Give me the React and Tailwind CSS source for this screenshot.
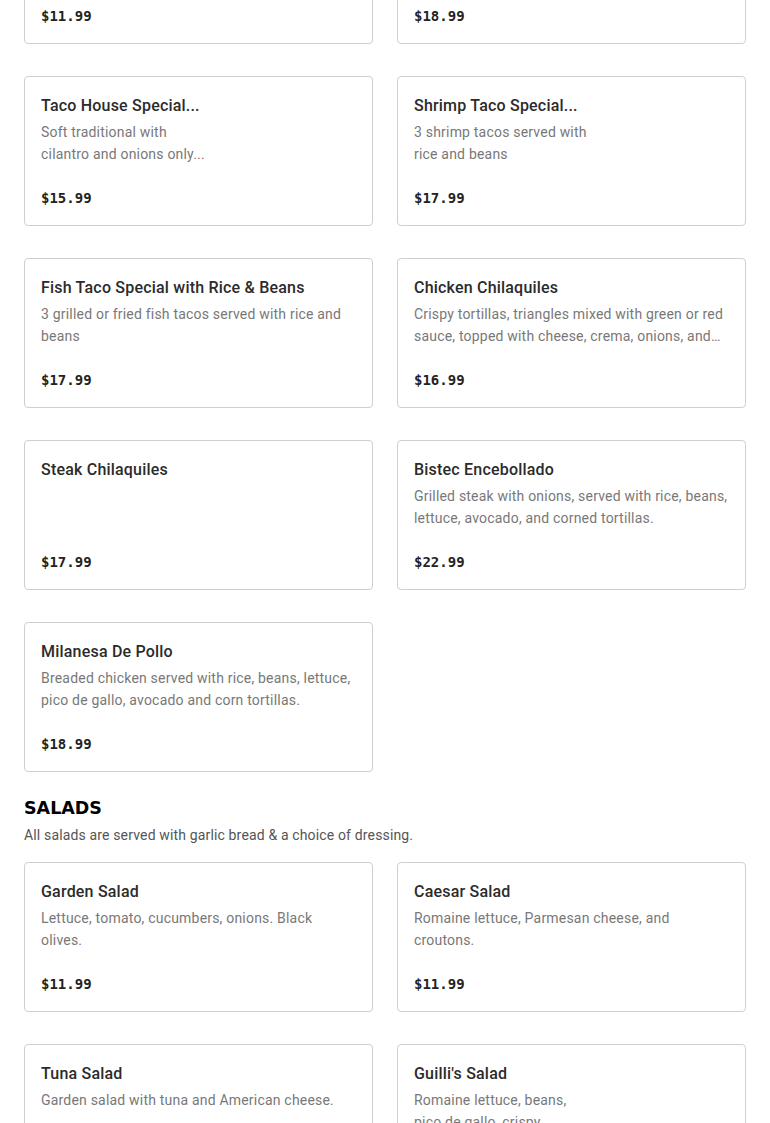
const tacos = [
  { name: "Beef Taco Plate", desc: "Three beef tacos with rice and beans.", price: "$11.99" },
  { name: "Carnitas Plate", desc: "Slow cooked pork with rice, beans and tortillas.", price: "$18.99" },
  { name: "Taco House Special...", desc: ["Soft traditional with", "cilantro and onions only..."], price: "$15.99" },
  { name: "Shrimp Taco Special...", desc: ["3 shrimp tacos served with", "rice and beans"], price: "$17.99" },
  { name: "Fish Taco Special with Rice & Beans", desc: "3 grilled or fried fish tacos served with rice and beans", price: "$17.99" },
  {
    name: "Chicken Chilaquiles",
    desc: "Crispy tortillas, triangles mixed with green or red sauce, topped with cheese, crema, onions, and avocado.",
    price: "$16.99",
  },
  { name: "Steak Chilaquiles", desc: "", price: "$17.99" },
  {
    name: "Bistec Encebollado",
    desc: "Grilled steak with onions, served with rice, beans, lettuce, avocado, and corned tortillas.",
    price: "$22.99",
  },
  {
    name: "Milanesa De Pollo",
    desc: "Breaded chicken served with rice, beans, lettuce, pico de gallo, avocado and corn tortillas.",
    price: "$18.99",
  },
];

const salads = [
  { name: "Garden Salad", desc: "Lettuce, tomato, cucumbers, onions. Black olives.", price: "$11.99" },
  { name: "Caesar Salad", desc: "Romaine lettuce, Parmesan cheese, and croutons.", price: "$11.99" },
  { name: "Tuna Salad", desc: "Garden salad with tuna and American cheese.", price: "$12.99" },
  { name: "Guilli's Salad", desc: ["Romaine lettuce, beans,", "pico de gallo, crispy..."], price: "$13.99" },
];

const sans = { fontFamily: "Roboto, 'Liberation Sans', sans-serif" };

function MenuCard({ item }) {
  return (
    <div className="h-[150px] flex flex-col border border-[#cfcfcf] rounded-[4px] bg-white px-4 pt-[17px] pb-[15px]">
      <h3 className="text-[16px] leading-6 font-medium tracking-[0.2px] text-[#2b2b2b] truncate">{item.name}</h3>
      <p className="mt-[3px] text-[14px] leading-[22px] tracking-[0.2px] text-[#787878] line-clamp-2">
        {Array.isArray(item.desc)
          ? item.desc.map((line, i) => (
              <span key={i} className="block">
                {line}
              </span>
            ))
          : item.desc}
      </p>
      <p
        className="mt-auto text-[14px] leading-6 font-bold text-[#222]"
        style={{ fontFamily: "'DejaVu Sans Mono', 'Liberation Mono', monospace" }}
      >
        {item.price}
      </p>
    </div>
  );
}

export default function App() {
  return (
    <div className="bg-white min-h-screen overflow-hidden" style={sans}>
      <div className="px-6 -mt-[106px]">
        <div className="grid grid-cols-2 gap-x-6 gap-y-8">
          {tacos.map((t) => (
            <MenuCard key={t.name} item={t} />
          ))}
        </div>

        <section className="mt-6">
          <h2
            className="text-[17.5px] leading-[24px] font-black text-black"
            style={{ fontFamily: "'DejaVu Sans', 'Liberation Sans', sans-serif" }}
          >
            SALADS
          </h2>
          <p className="mt-[5px] text-[14px] leading-5 tracking-[0.15px] text-[#555]">
            All salads are served with garlic bread &amp; a choice of dressing.
          </p>
          <div className="mt-[17px] grid grid-cols-2 gap-x-6 gap-y-8">
            {salads.map((s) => (
              <MenuCard key={s.name} item={s} />
            ))}
          </div>
        </section>
      </div>
    </div>
  );
}
